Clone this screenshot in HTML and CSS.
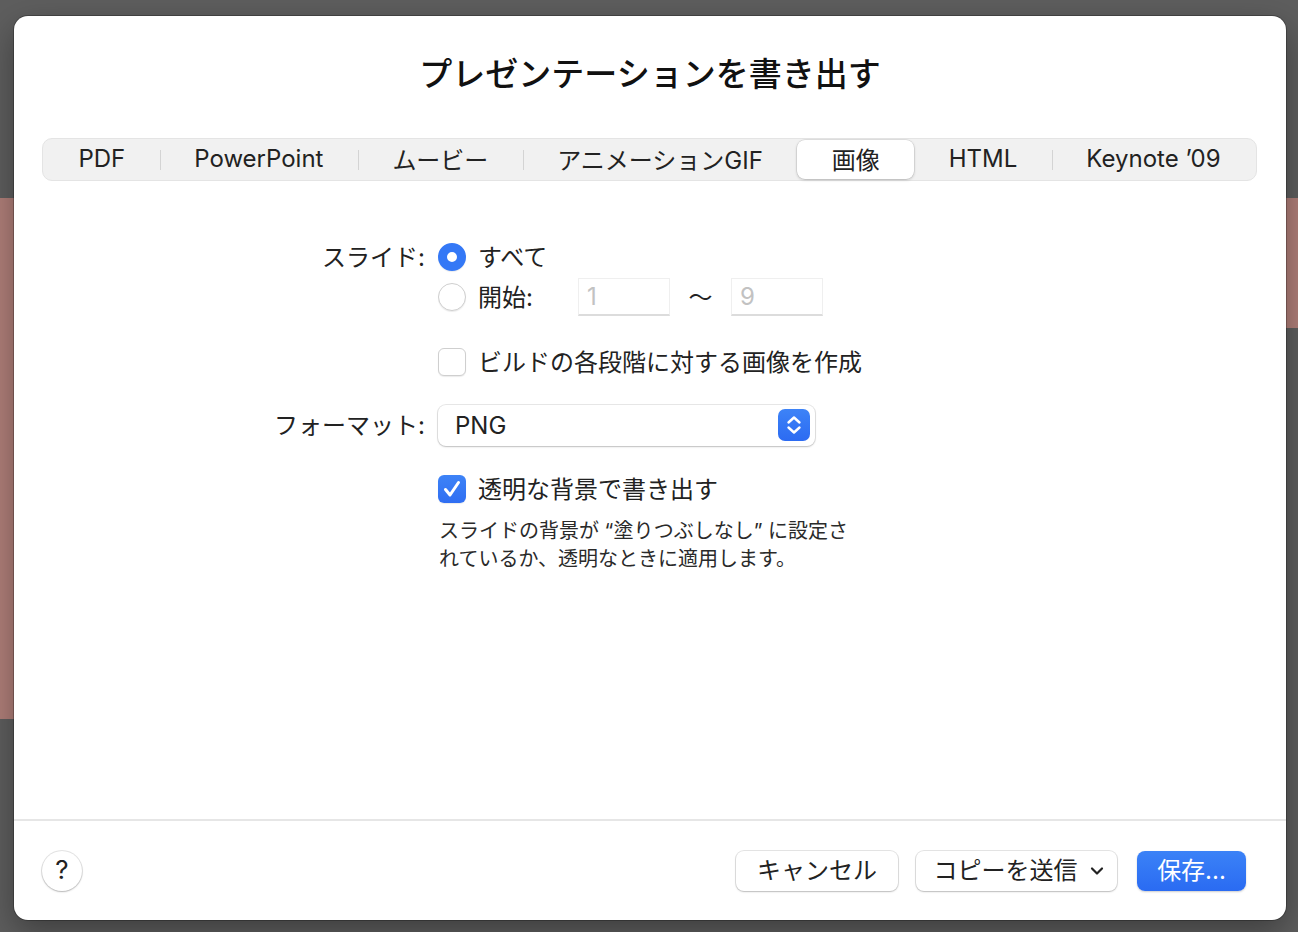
FILE: index.html
```html
<!DOCTYPE html>
<html lang="ja">
<head>
    <meta charset="UTF-8">
    <meta name="viewport" content="width=device-width, initial-scale=1.0">
    <title>プレゼンテーションを書き出す</title>
    <link rel="stylesheet" href="styles.css">
</head>
<body>

    <div class="backdrop">
        <div class="slide-left"></div>
        <div class="slide-right"></div>
    </div>

    <div class="dialog">
        <h1 class="title">プレゼンテーションを書き出す</h1>

        <nav class="tabs">
            <div class="tab">PDF</div>
            <div class="tab">PowerPoint</div>
            <div class="tab">ムービー</div>
            <div class="tab">アニメーションGIF</div>
            <div class="tab active">画像</div>
            <div class="tab">HTML</div>
            <div class="tab">Keynote ’09</div>
        </nav>

        <section class="form">
            <div class="row row-first">
                <div class="label">スライド:</div>
                <div class="field">
                    <span class="radio checked"></span>
                    <span class="opt">すべて</span>
                </div>
            </div>

            <div class="row">
                <div class="label"></div>
                <div class="field">
                    <span class="radio"></span>
                    <span class="opt opt-range">開始:</span>
                    <div class="num">1</div>
                    <span class="tilde">〜</span>
                    <div class="num">9</div>
                </div>
            </div>

            <div class="row row-build">
                <div class="label"></div>
                <div class="field">
                    <span class="check"></span>
                    <span class="opt">ビルドの各段階に対する画像を作成</span>
                </div>
            </div>

            <div class="row row-format">
                <div class="label">フォーマット:</div>
                <div class="field">
                    <div class="popup">
                        <span>PNG</span>
                        <span class="stepper">
                            <svg width="32" height="32" viewBox="0 0 32 32">
                                <path d="M10.5 13.5 L16 8.5 L21.5 13.5" fill="none" stroke="#fff" stroke-width="2.4" stroke-linecap="round" stroke-linejoin="round"/>
                                <path d="M10.5 18.5 L16 23.5 L21.5 18.5" fill="none" stroke="#fff" stroke-width="2.4" stroke-linecap="round" stroke-linejoin="round"/>
                            </svg>
                        </span>
                    </div>
                </div>
            </div>

            <div class="row row-alpha">
                <div class="label"></div>
                <div class="field">
                    <span class="check checked">
                        <svg width="28" height="28" viewBox="0 0 28 28">
                            <path d="M7.5 14.5 L12 20 L20.5 7.5" fill="none" stroke="#fff" stroke-width="3" stroke-linecap="round" stroke-linejoin="round"/>
                        </svg>
                    </span>
                    <span class="opt">透明な背景で書き出す</span>
                </div>
            </div>

            <div class="row row-note">
                <div class="label"></div>
                <p class="note">スライドの背景が “塗りつぶしなし” に設定さ<br>れているか、透明なときに適用します。</p>
            </div>
        </section>

        <footer class="footer">
            <button class="help">?</button>
            <div class="actions">
                <button class="btn btn-cancel">キャンセル</button>
                <button class="btn btn-send">コピーを送信
                    <svg width="14" height="10" viewBox="0 0 14 10">
                        <path d="M2 2.5 L7 7.5 L12 2.5" fill="none" stroke="#222" stroke-width="2.2" stroke-linecap="round" stroke-linejoin="round"/>
                    </svg>
                </button>
                <button class="btn btn-save">保存...</button>
            </div>
        </footer>
    </div>

</body>
</html>
```

FILE: styles.css
```css
body {
    margin: 0;
    padding: 0;
    width: 1298px;
    height: 932px;
    overflow: hidden;
    background-color: #5e5e5e;
    font-family: "Inter", "Noto Sans CJK JP", sans-serif;
    color: #222;
}

/* what is behind the sheet */
.backdrop {
    display: flex;
    justify-content: space-between;
    align-items: flex-start;
    padding-top: 198px;
}

.slide-left {
    width: 14px;
    height: 521px;
    background-color: #b07f79;
}

.slide-right {
    width: 12px;
    height: 130px;
    background-color: #b07f79;
}

/* the sheet itself */
.dialog {
    position: absolute;
    top: 16px;
    left: 14px;
    width: 1272px;
    height: 904px;
    background-color: #fff;
    border-radius: 14px;
    box-shadow: 0 0 0 1px rgba(0, 0, 0, 0.25), 0 12px 34px rgba(0, 0, 0, 0.35);
    display: flex;
    flex-direction: column;
}

.title {
    margin: 38px 0 0;
    height: 40px;
    line-height: 40px;
    font-size: 33px;
    font-weight: 500;
    text-align: center;
    color: #111;
}

.tabs {
    display: flex;
    margin: 44px 29px 0 28px;
    height: 43px;
    box-sizing: border-box;
    padding: 1px;
    background-color: #f1f1f1;
    border: 1px solid #e4e4e4;
    border-radius: 10px;
}

.tab {
    position: relative;
    flex: 1 1 auto;
    display: flex;
    align-items: center;
    justify-content: center;
    padding-bottom: 2px;
    font-size: 24px;
    color: #222;
    white-space: nowrap;
    border-radius: 8px;
}

.tab + .tab::before {
    content: "";
    position: absolute;
    left: 0;
    top: 10px;
    height: 20px;
    border-left: 1px solid #d4d4d4;
}

.tab.active::before,
.tab.active + .tab::before {
    display: none;
}

.tab.active {
    background-color: #fff;
    box-shadow: 0 0 0 0.5px rgba(0, 0, 0, 0.12), 0 1px 3px rgba(0, 0, 0, 0.2);
}

/* form */
.form {
    flex: 1;
}

.row {
    display: grid;
    grid-template-columns: 411px 1fr;
    column-gap: 13px;
    align-items: center;
    height: 40px;
}

.row-first {
    margin-top: 56px;
}

.row-build {
    margin-top: 25px;
}

.row-format {
    margin-top: 22px;
    height: 42px;
}

.row-alpha {
    margin-top: 23px;
}

.row-note {
    margin-top: 8px;
    height: auto;
    align-items: start;
}

.label {
    text-align: right;
    font-size: 24px;
    color: #222;
    padding-bottom: 4px;
}

.field {
    display: flex;
    align-items: center;
}

.opt {
    font-size: 24px;
    margin-left: 12px;
    padding-bottom: 3px;
}

.opt-range {
    width: 100px;
}

.radio {
    width: 28px;
    height: 28px;
    box-sizing: border-box;
    border-radius: 50%;
    background-color: #fff;
    border: 1px solid #cfcfcf;
    box-shadow: 0 1px 1px rgba(0, 0, 0, 0.08);
}

.radio.checked {
    border: 9px solid #3478f6;
    background-color: #fff;
}

.check {
    width: 28px;
    height: 28px;
    box-sizing: border-box;
    border-radius: 6px;
    background-color: #fff;
    border: 1px solid #cfcfcf;
    box-shadow: 0 1px 1px rgba(0, 0, 0, 0.08);
}

.check.checked {
    border: none;
    background: linear-gradient(#3d83f7, #2f6ef2);
}

.check svg {
    display: block;
}

.num {
    width: 92px;
    height: 38px;
    box-sizing: border-box;
    padding-left: 8px;
    line-height: 36px;
    font-size: 24px;
    color: #c2c2c2;
    border: 1px solid #efefef;
    border-bottom: 2px solid #dcdcdc;
}

.tilde {
    width: 61px;
    text-align: center;
    font-size: 24px;
    padding-bottom: 3px;
}

.popup {
    width: 377px;
    height: 41px;
    box-sizing: border-box;
    display: flex;
    align-items: center;
    justify-content: space-between;
    padding: 0 5px 0 17px;
    font-size: 24px;
    border-radius: 8px;
    background-color: #fff;
    box-shadow: 0 0 0 1px rgba(0, 0, 0, 0.09), 0 1px 2px rgba(0, 0, 0, 0.18);
}

.stepper {
    width: 32px;
    height: 32px;
    border-radius: 7px;
    background: linear-gradient(#3d83f7, #2c6bf2);
}

.stepper svg {
    display: block;
}

.note {
    grid-column: 2;
    margin: 0 0 0 1px;
    font-size: 20px;
    line-height: 28px;
    color: #2a2a2a;
}

/* footer */
.footer {
    height: 101px;
    box-sizing: border-box;
    border-top: 2px solid #e6e6e6;
    display: flex;
    align-items: center;
    justify-content: space-between;
    padding: 0 40px 0 28px;
}

.help {
    width: 40px;
    height: 40px;
    border-radius: 50%;
    border: none;
    background-color: #fff;
    font-family: inherit;
    font-size: 26px;
    color: #222;
    padding: 0 0 2px;
    box-shadow: 0 0 0 1px rgba(0, 0, 0, 0.1), 0 1px 2px rgba(0, 0, 0, 0.2);
}

.actions {
    display: flex;
    align-items: center;
}

.btn {
    height: 40px;
    border: none;
    border-radius: 8px;
    font-family: inherit;
    font-size: 24px;
    color: #222;
    background-color: #fff;
    box-shadow: 0 0 0 1px rgba(0, 0, 0, 0.1), 0 1px 2px rgba(0, 0, 0, 0.18);
    display: flex;
    align-items: center;
    justify-content: center;
    padding-bottom: 5px;
}

.btn svg {
    margin-top: 5px;
}

.btn-cancel {
    width: 162px;
}

.btn-send {
    width: 201px;
    margin-left: 18px;
    gap: 12px;
    padding-left: 10px;
}

.btn-save {
    width: 109px;
    margin-left: 20px;
    color: #fff;
    background: linear-gradient(#3b82f7, #2a6bf2);
    box-shadow: 0 1px 2px rgba(0, 0, 0, 0.2);
}
```
